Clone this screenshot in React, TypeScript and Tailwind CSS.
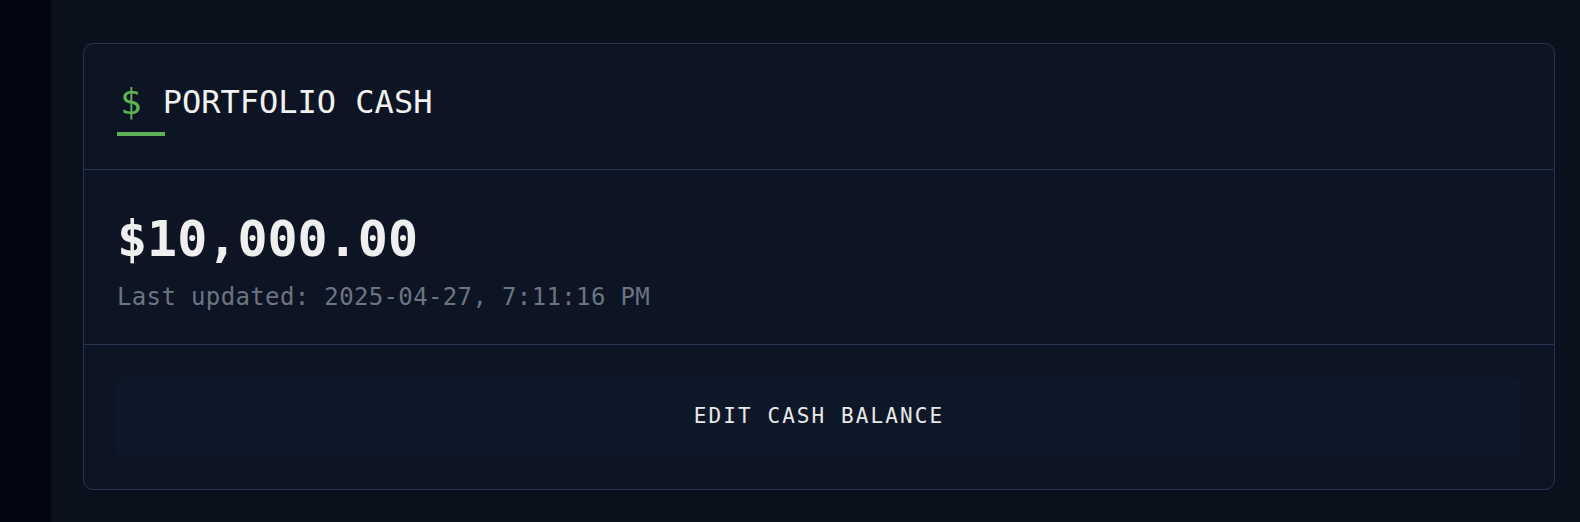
export default function App() {
  const mono = { fontFamily: '"DejaVu Sans Mono", "Liberation Mono", monospace' };

  return (
    <div className="flex h-[522px] w-[1580px] overflow-hidden bg-[#0a111c]" style={mono}>
      {/* Sidebar strip */}
      <div className="w-[51px] shrink-0 bg-[#030712]" />

      {/* Main */}
      <div className="flex-1 pl-8 pr-[25px] pt-[43px]">
        <div className="rounded-[10px] border border-[#25354f] bg-[#0d1524]">
          {/* Header */}
          <div className="border-b border-[#25354f] px-[33px] pt-[40px] pb-[33px]">
            <div className="flex items-center leading-[36px]">
              <span className="ml-[3px] text-[36px] text-[#5fb155]">$</span>
              <span className="ml-[21px] text-[32px] text-[#f1f1f1]">PORTFOLIO CASH</span>
            </div>
            <div className="mt-3 h-1 w-12 bg-[#5fb155]" />
          </div>

          {/* Balance */}
          <div className="border-b border-[#25354f] px-[33px] pt-[41px] pb-[33px]">
            <p className="text-[50px] font-bold leading-[56px] text-[#efefef]">$10,000.00</p>
            <p className="mt-[16px] text-[24px] leading-[28px] tracking-[0.015em] text-[#6b7482]">
              Last updated: 2025-04-27, 7:11:16 PM
            </p>
          </div>

          {/* Action */}
          <div className="px-[33px] pt-[32px] pb-[32px]">
            <button className="flex h-20 w-full items-center justify-center rounded-lg bg-[#0f1829] text-[21px] tracking-[0.1em] text-[#e8e8e8]">
              EDIT CASH BALANCE
            </button>
          </div>
        </div>
      </div>
    </div>
  );
}
